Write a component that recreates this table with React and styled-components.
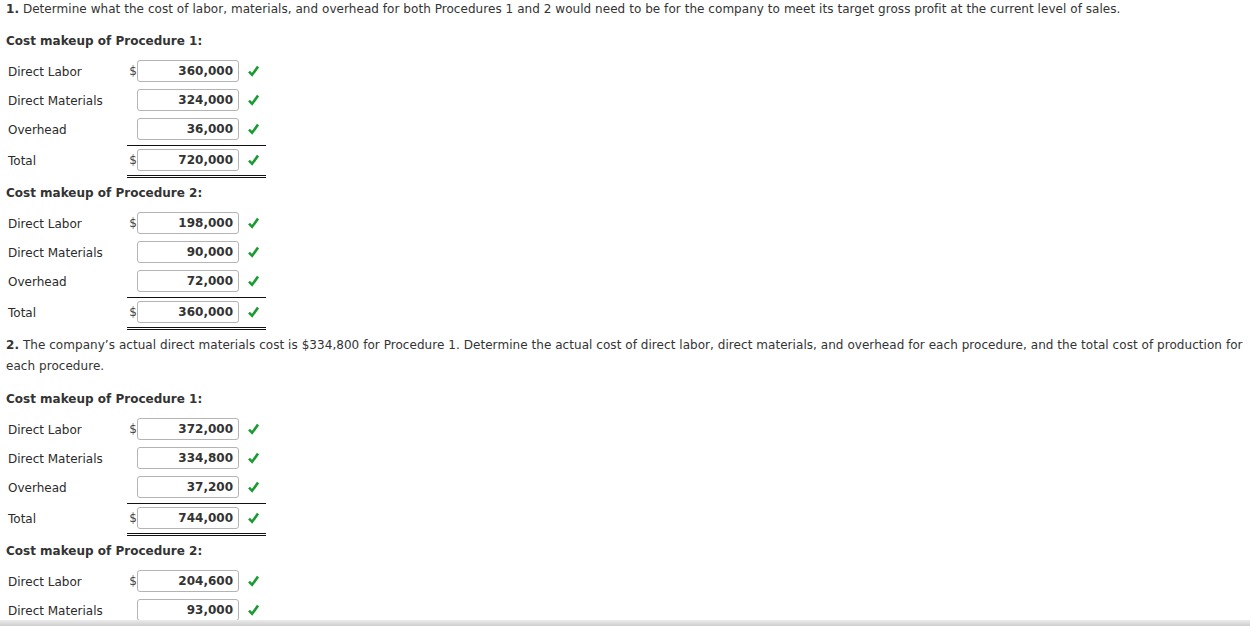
import React from "react";
import styled, { createGlobalStyle } from "styled-components";

const GlobalStyle = createGlobalStyle`
  html, body {
    margin: 0;
    padding: 0;
    background: #fff;
    overflow: hidden;
  }
  body {
    font-family: Verdana, "DejaVu Sans", sans-serif;
    font-size: 12px;
    color: #333;
  }
`;

const parts = [
  {
    type: "question",
    num: "1.",
    text: " Determine what the cost of labor, materials, and overhead for both Procedures 1 and 2 would need to be for the company to meet its target gross profit at the current level of sales.",
  },
  {
    type: "section",
    title: "Cost makeup of Procedure 1:",
    rows: [
      { label: "Direct Labor", value: "360,000", dollar: true },
      { label: "Direct Materials", value: "324,000" },
      { label: "Overhead", value: "36,000" },
    ],
    total: "720,000",
  },
  {
    type: "section",
    title: "Cost makeup of Procedure 2:",
    rows: [
      { label: "Direct Labor", value: "198,000", dollar: true },
      { label: "Direct Materials", value: "90,000" },
      { label: "Overhead", value: "72,000" },
    ],
    total: "360,000",
  },
  {
    type: "question",
    num: "2.",
    text: " The company’s actual direct materials cost is $334,800 for Procedure 1. Determine the actual cost of direct labor, direct materials, and overhead for each procedure, and the total cost of production for each procedure.",
  },
  {
    type: "section",
    title: "Cost makeup of Procedure 1:",
    rows: [
      { label: "Direct Labor", value: "372,000", dollar: true },
      { label: "Direct Materials", value: "334,800" },
      { label: "Overhead", value: "37,200" },
    ],
    total: "744,000",
  },
  {
    type: "section",
    title: "Cost makeup of Procedure 2:",
    rows: [
      { label: "Direct Labor", value: "204,600", dollar: true },
      { label: "Direct Materials", value: "93,000" },
    ],
  },
];

const Check = () => (
  <CheckMark width="11" height="12" viewBox="0 0 11 12">
    <path d="M1 6.6 L4.1 9.8 L10 1.6" fill="none" stroke="#1c9b35" strokeWidth="2.6" />
  </CheckMark>
);

const MoneyLine = ({ value, dollar }) => (
  <Money>
    <Dollar>{dollar ? "$" : ""}</Dollar>
    <Amount readOnly value={value} />
    <Check />
  </Money>
);

const App = () => {
  return (
    <Page>
      <GlobalStyle />
      {parts.map((p, i) =>
        p.type === "question" ? (
          <Question key={i} $first={i === 0}>
            <b>{p.num}</b>
            {p.text}
          </Question>
        ) : (
          <Section key={i}>
            <Heading>{p.title}</Heading>
            <Rows>
              {p.rows.map((r) => (
                <Row key={r.label}>
                  <Label>{r.label}</Label>
                  <MoneyLine value={r.value} dollar={r.dollar} />
                </Row>
              ))}
              {p.total && (
                <TotalRow>
                  <Label>Total</Label>
                  <TotalCell>
                    <MoneyLine value={p.total} dollar />
                  </TotalCell>
                </TotalRow>
              )}
            </Rows>
          </Section>
        )
      )}
      <BottomShade />
    </Page>
  );
};

export default App;

const Page = styled.div`
  padding: 0 6px;
  width: 1238px;
`;

const Question = styled.p`
  margin: ${(p) => (p.$first ? "0 0 14px" : "5px 0 13px")};
  line-height: ${(p) => (p.$first ? "18px" : "21px")};
  letter-spacing: 0.05px;
  b {
    font-weight: bold;
  }
`;

const Section = styled.div`
  & + & {
    margin-top: 6px;
  }
`;

const Heading = styled.div`
  font-weight: bold;
  line-height: 18px;
  margin-bottom: 10px;
`;

const Rows = styled.div`
  display: flex;
  flex-direction: column;
  gap: 7px;
`;

const Row = styled.div`
  display: flex;
  align-items: flex-start;
`;

const TotalRow = styled(Row)`
  margin-top: -2px;
  & > div:first-child {
    margin-top: 4px;
  }
`;

const Label = styled.div`
  width: 119px;
  padding-left: 2px;
  height: 22px;
  line-height: 25px;
  color: #2b2b2b;
`;

const Money = styled.div`
  display: flex;
  align-items: center;
  width: 139px;
  height: 22px;
`;

const TotalCell = styled.div`
  border-top: 1px solid #111;
  border-bottom: 3px double #111;
  padding: 3px 0 4px;
`;

const Dollar = styled.span`
  width: 10px;
  text-align: right;
  line-height: 22px;
  color: #444;
`;

const Amount = styled.input`
  box-sizing: border-box;
  width: 102px;
  height: 22px;
  margin: 0;
  padding: 0 5px 0 4px;
  border: 1px solid #b4b4b4;
  border-radius: 3px;
  background: #fff;
  text-align: right;
  font-family: Verdana, "DejaVu Sans", sans-serif;
  font-size: 12px;
  font-weight: bold;
  color: #333;
  outline: none;
`;

const CheckMark = styled.svg`
  margin-left: 9px;
  display: block;
`;

const BottomShade = styled.div`
  position: fixed;
  left: 0;
  right: 0;
  bottom: 0;
  height: 6px;
  background: linear-gradient(#ececec, #cdcdcd);
`;
